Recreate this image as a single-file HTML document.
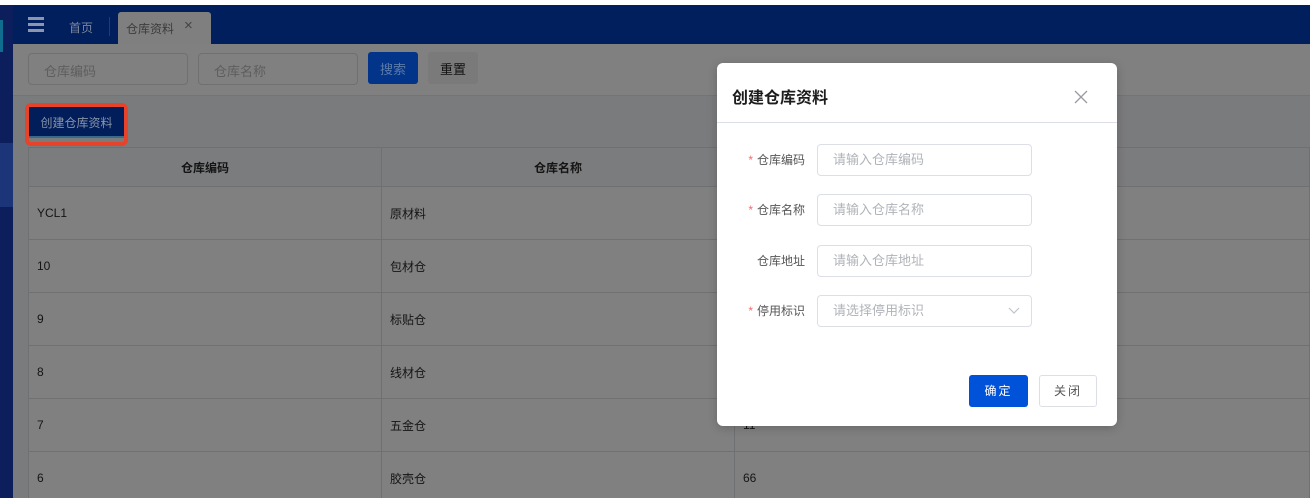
<!DOCTYPE html>
<html><head><meta charset="utf-8"><style>
*{box-sizing:border-box;margin:0;padding:0}
html,body{width:1310px;height:498px;overflow:hidden}
body{position:relative;background:#7a7b7d;font-family:"Liberation Sans","Noto Sans CJK SC",sans-serif;font-size:13px;color:#1a1a1a}
.a{position:absolute}
.cell{position:absolute;border-right:1px solid #6f7072;border-bottom:1px solid #6f7072;background:#808080;padding-left:8px;display:flex;align-items:center;font-size:12px;color:#141414}
.inp{position:absolute;border:1px solid #dcdfe6;border-radius:4px;height:32px;width:215px;left:817px;padding-left:15px;line-height:30px;color:#b0b3b8;font-size:13px;background:#fff}
.lbl{position:absolute;right:505px;font-size:12px;color:#555;line-height:32px}
.lbl b{color:#f56c6c;font-weight:normal;margin-right:4px}
</style></head><body>
<div class="a" style="left:0;top:0;width:1310px;height:5px;background:#fff"></div>
<div class="a" style="left:0;top:5px;width:1310px;height:39px;background:#001f5c"></div>
<div class="a" style="left:0;top:5px;width:13px;height:493px;background:#0d1e5c"></div>
<div class="a" style="left:0;top:20px;width:3px;height:32px;background:#0f6e8f"></div>
<div class="a" style="left:0;top:143px;width:13px;height:64px;background:#1b3578"></div>
<div class="a" style="left:28px;top:17px;width:16px;height:3px;background:#8c96ad"></div>
<div class="a" style="left:28px;top:23px;width:16px;height:3px;background:#8c96ad"></div>
<div class="a" style="left:28px;top:29px;width:16px;height:3px;background:#8c96ad"></div>
<div class="a" style="left:69px;top:19px;color:#7c869c;font-size:12px">首页</div>
<div class="a" style="left:109px;top:17px;width:1px;height:19px;background:#243a70"></div>
<div class="a" style="left:118px;top:12px;width:93px;height:32px;background:#7f7f7f;border-radius:3px 3px 0 0;color:#3c3c3c;font-size:12px;padding:8px 0 0 8px">仓库资料<span style="position:absolute;left:66px;top:5px;color:#444;font-size:15px">×</span></div>
<div class="a" style="left:13px;top:44px;width:1297px;height:52px;background:#808080;border-bottom:1px solid #737476"></div>
<div class="a" style="left:28px;top:53px;width:160px;height:32px;border:1px solid #6f7072;border-radius:4px;color:#5e5e5e;padding:7px 0 0 15px">仓库编码</div>
<div class="a" style="left:198px;top:53px;width:160px;height:32px;border:1px solid #6f7072;border-radius:4px;color:#5e5e5e;padding:7px 0 0 15px">仓库名称</div>
<div class="a" style="left:368px;top:52px;width:50px;height:32px;background:#02348a;border-radius:3px;color:#5c7aa8;font-size:13px;text-align:center;line-height:36px">搜索</div>
<div class="a" style="left:428px;top:52px;width:50px;height:32px;background:#7a7a7a;border-radius:3px;color:#111;font-size:13px;text-align:center;line-height:36px">重置</div>
<div class="a" style="left:25px;top:103px;width:103px;height:43px;border:4px solid #e6432a;border-radius:6px"></div>
<div class="a" style="left:29px;top:107px;width:95px;height:31px;background:#011d5a;border-bottom:2px solid #3a6a8a;color:#8894a8;font-size:12px;text-align:center;line-height:32px">创建仓库资料</div>
<div class="a" style="left:28px;top:147px;width:1282px;height:1px;background:#6f7072"></div>
<div class="a" style="left:28px;top:147px;width:1px;height:351px;background:#6f7072"></div>
<div class="cell" style="left:29px;top:148px;width:353px;height:39px;justify-content:center;padding:0;font-weight:bold;background:#7b7c7e">仓库编码</div>
<div class="cell" style="left:382px;top:148px;width:353px;height:39px;justify-content:center;padding:0;font-weight:bold;background:#7b7c7e">仓库名称</div>
<div class="cell" style="left:735px;top:148px;width:575px;height:39px;background:#7b7c7e"></div>

<div class="cell" style="left:29px;top:187px;width:353px;height:53px">YCL1</div><div class="cell" style="left:382px;top:187px;width:353px;height:53px">原材料</div><div class="cell" style="left:735px;top:187px;width:575px;height:53px"></div>
<div class="cell" style="left:29px;top:240px;width:353px;height:53px">10</div><div class="cell" style="left:382px;top:240px;width:353px;height:53px">包材仓</div><div class="cell" style="left:735px;top:240px;width:575px;height:53px"></div>
<div class="cell" style="left:29px;top:293px;width:353px;height:53px">9</div><div class="cell" style="left:382px;top:293px;width:353px;height:53px">标贴仓</div><div class="cell" style="left:735px;top:293px;width:575px;height:53px"></div>
<div class="cell" style="left:29px;top:346px;width:353px;height:53px">8</div><div class="cell" style="left:382px;top:346px;width:353px;height:53px">线材仓</div><div class="cell" style="left:735px;top:346px;width:575px;height:53px"></div>
<div class="cell" style="left:29px;top:399px;width:353px;height:53px">7</div><div class="cell" style="left:382px;top:399px;width:353px;height:53px">五金仓</div><div class="cell" style="left:735px;top:399px;width:575px;height:53px">11</div>
<div class="cell" style="left:29px;top:452px;width:353px;height:53px">6</div><div class="cell" style="left:382px;top:452px;width:353px;height:53px">胶壳仓</div><div class="cell" style="left:735px;top:452px;width:575px;height:53px">66</div>

<div class="a" style="left:717px;top:63px;width:400px;height:363px;background:#fff;border-radius:6px;box-shadow:0 2px 10px rgba(0,0,0,.2)"></div>
<div class="a" style="left:732px;top:84px;font-size:16px;font-weight:bold;color:#1d1d1d">创建仓库资料</div>
<svg class="a" style="left:1074px;top:90px" width="14" height="14" viewBox="0 0 14 14"><path d="M1 1L13 13M13 1L1 13" stroke="#9a9ca2" stroke-width="1.3"/></svg>
<div class="a" style="left:717px;top:122px;width:400px;height:1px;background:#dcdfe6"></div>
<div class="lbl" style="top:144px"><b>*</b>仓库编码</div><div class="inp" style="top:144px">请输入仓库编码</div>
<div class="lbl" style="top:194px"><b>*</b>仓库名称</div><div class="inp" style="top:194px">请输入仓库名称</div>
<div class="lbl" style="top:245px">仓库地址</div><div class="inp" style="top:245px">请输入仓库地址</div>
<div class="lbl" style="top:295px"><b>*</b>停用标识</div><div class="inp" style="top:295px">请选择停用标识</div>
<svg class="a" style="left:1008px;top:307px" width="12" height="8" viewBox="0 0 12 8"><path d="M1 1L6 6L11 1" stroke="#c0c4cc" fill="none" stroke-width="1.2"/></svg>
<div class="a" style="left:969px;top:375px;width:59px;height:32px;background:#0052d9;border-radius:3px;color:#fff;font-size:12px;text-align:center;line-height:32px;letter-spacing:2px">确定</div>
<div class="a" style="left:1039px;top:375px;width:58px;height:32px;border:1px solid #dcdfe6;border-radius:3px;color:#555;font-size:12px;text-align:center;line-height:30px;letter-spacing:2px">关闭</div>
</body></html>
